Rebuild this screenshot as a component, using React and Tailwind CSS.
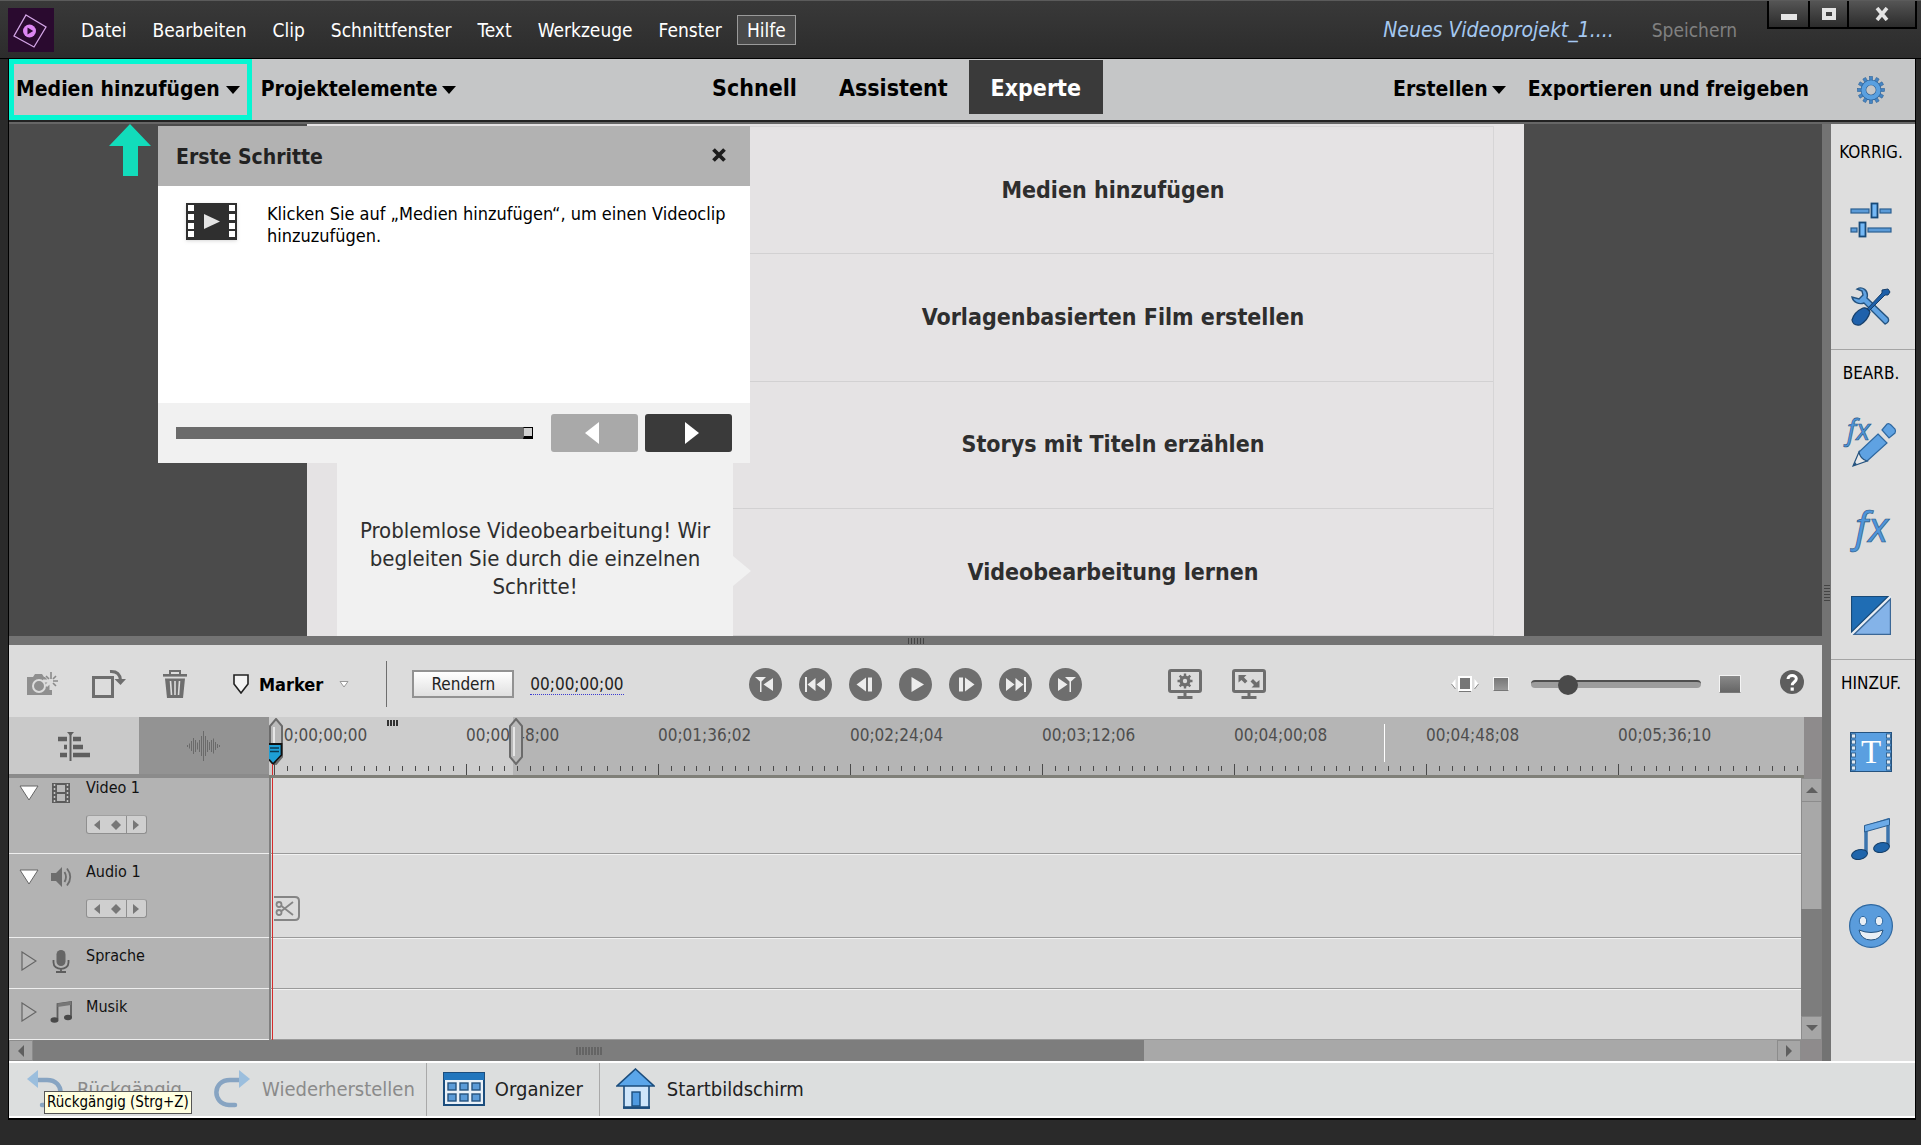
import React from "react";

const cx = (...c) => c.filter(Boolean).join(" ");

function Caret({ className }) {
  return (
    <svg className={cx("h-2 w-3.5 shrink-0", className)} viewBox="0 0 14 8" aria-hidden="true">
      <path d="M0 0H14L7 8Z" fill="currentColor" />
    </svg>
  );
}

function Logo() {
  return (
    <svg className="h-11 w-[46px] shrink-0" viewBox="0 0 46 44" aria-hidden="true">
      <rect width="46" height="44" fill="#2a0a2f" />
      <path d="M18 7L38 19L26 39L6 28Z" fill="none" stroke="#d3a5e6" strokeWidth="1.3" />
      <circle cx="21.5" cy="23" r="6.5" fill="#dd86f3" />
      <path d="M19.5 19.6V26.4L25.2 23Z" fill="#2a0a2f" />
    </svg>
  );
}

function Gear() {
  return (
    <svg className="h-7 w-7" viewBox="-16 -16 32 32" aria-hidden="true">
      {Array.from({ length: 12 }, (_, i) => (
        <rect key={i} x="-1.8" y="-15.5" width="3.6" height="6" fill="#4585c4" stroke="#2b5f95" strokeWidth=".6" transform={`rotate(${i * 30})`} />
      ))}
      <circle r="8.6" fill="none" stroke="#2b5f95" strokeWidth="6.4" />
      <circle r="8.6" fill="none" stroke="#5aa0e0" strokeWidth="5" />
    </svg>
  );
}

const MENU = ["Datei", "Bearbeiten", "Clip", "Schnittfenster", "Text", "Werkzeuge", "Fenster"];

function TitleBar() {
  return (
    <header className="relative flex h-[58px] shrink-0 items-center border-b border-black bg-linear-to-b from-[#393939] to-[#2c2c2c] pl-2 text-white">
      <Logo />
      <nav className="ml-3.5 flex items-center text-[19px] leading-6">
        {MENU.map((m) => (
          <button key={m} className="px-[13px]">{m}</button>
        ))}
        <button className="ml-0.5 border border-[#9a9a9a] bg-[#4a4a4a] px-[9px] py-0.5 leading-6">Hilfe</button>
      </nav>
      <div className="ml-auto mr-[184px] flex items-center gap-[38px] leading-6">
        <span className="text-[21px] italic text-[#a5c8f0]">Neues Videoprojekt_1....</span>
        <button className="text-[19px] text-[#808080]" disabled>Speichern</button>
      </div>
      <div className="absolute right-1 top-0 flex gap-0.5 border-2 border-t-0 border-black bg-black">
        <button aria-label="Minimieren" className="flex h-[26px] w-[39px] items-center justify-center bg-linear-to-b from-[#555] to-[#2c2c2c]">
          <span className="mt-1.5 h-1.5 w-4 bg-[#e4e4e4]" />
        </button>
        <button aria-label="Maximieren" className="flex h-[26px] w-[37px] items-center justify-center bg-linear-to-b from-[#555] to-[#2c2c2c]">
          <span className="h-3 w-3.5 border-[4px] border-[#e4e4e4]" />
        </button>
        <button aria-label="Schließen" className="flex h-[26px] w-[66px] items-center justify-center bg-linear-to-b from-[#555] to-[#2c2c2c]">
          <svg className="h-3.5 w-4" viewBox="0 0 16 14" aria-hidden="true">
            <path d="M3 1L13 13M13 1L3 13" stroke="#e4e4e4" strokeWidth="3.6" />
          </svg>
        </button>
      </div>
    </header>
  );
}

function ModeBar() {
  return (
    <div className="relative flex h-[61px] shrink-0 items-center bg-[#c5c6c7] font-bold text-black">
      <div className="flex grow-[683] basis-0 items-center self-stretch text-[21px]">
        <button className="flex items-center self-stretch border-[5px] border-[#06f6d2] pl-0.5 pr-[7px]">
          Medien hinzufügen
          <Caret className="ml-1.5" />
        </button>
        <button className="ml-[9px] flex items-center">
          Projektelemente
          <Caret className="ml-1" />
        </button>
      </div>
      <nav className="-mt-1.5 flex items-center text-[23px]">
        <button className="px-[21px] pt-1">Schnell</button>
        <button className="px-[21px] pt-1">Assistent</button>
        <button className="h-[54px] bg-[#3a3a3a] px-[22px] pt-1 text-white">Experte</button>
      </nav>
      <div className="flex grow-[813] basis-0 items-center justify-end text-[21px]">
        <button className="mr-[22px] flex items-center">
          Erstellen
          <Caret className="ml-1" />
        </button>
        <button className="mr-12">Exportieren und freigeben</button>
        <button aria-label="Einstellungen" className="mr-[30px]"><Gear /></button>
      </div>
    </div>
  );
}

function GuideDialog() {
  return (
    <section role="dialog" aria-label="Erste Schritte" className="absolute left-[149px] top-0.5 flex w-[592px] flex-col bg-white">
      <div className="flex h-[60px] items-center justify-between bg-[#b2b2b2] pl-[18px] pr-6 pt-1">
        <h2 className="text-[21px] font-bold text-[#222]">Erste Schritte</h2>
        <button aria-label="Schließen" className="-mt-1.5">
          <svg className="h-3.5 w-3.5" viewBox="0 0 14 14" aria-hidden="true">
            <path d="M1.5 1.5L12.5 12.5M12.5 1.5L1.5 12.5" stroke="#1c1c1c" strokeWidth="3.8" />
          </svg>
        </button>
      </div>
      <div className="flex h-[217px] items-start gap-[30px] pl-7 pr-6 pt-[17px]">
        <svg className="h-[37px] w-[51px] shrink-0 drop-shadow" viewBox="0 0 51 37" aria-hidden="true">
          <rect width="51" height="37" fill="#2f2f2f" />
          {[2, 11, 20, 28].map((y) => (
            <g key={y} fill="#fff">
              <rect x="2" y={y} width="6" height="6" />
              <rect x="43" y={y} width="6" height="6" />
            </g>
          ))}
          <path d="M18 11V26L34 18.5Z" fill="#e4e4e4" />
        </svg>
        <p className="text-[18px] leading-[22px] text-black">Klicken Sie auf „Medien hinzufügen“, um einen Videoclip hinzuzufügen.</p>
      </div>
      <div className="flex h-[60px] items-center bg-[#f1f1f1] px-[18px]">
        <div role="progressbar" aria-label="Fortschritt" aria-valuenow="97" className="flex h-3 flex-1 bg-[#6b6b6b]">
          <span className="ml-auto w-2.5 border border-b-[3px] border-black border-l-[#6b6b6b] bg-[#d0d0d0]" />
        </div>
        <button aria-label="Zurück" className="ml-[18px] flex h-[38px] w-[87px] items-center justify-center rounded-[3px] bg-[#a9a9a9]">
          <svg className="mr-1.5 h-[22px] w-3.5" viewBox="0 0 14 22" aria-hidden="true"><path d="M14 0V22L0 11Z" fill="#fff" /></svg>
        </button>
        <button aria-label="Weiter" className="ml-[7px] flex h-[38px] w-[87px] items-center justify-center rounded-[3px] bg-[#3a3a3a]">
          <svg className="ml-1.5 h-[22px] w-3.5" viewBox="0 0 14 22" aria-hidden="true"><path d="M0 0V22L14 11Z" fill="#fff" /></svg>
        </button>
      </div>
    </section>
  );
}

const TOPICS = ["Medien hinzufügen", "Vorlagenbasierten Film erstellen", "Storys mit Titeln erzählen", "Videobearbeitung lernen"];

function Preview() {
  return (
    <div className="relative flex min-h-0 flex-1 justify-center overflow-hidden bg-[#4b4b4b]">
      <div className="flex w-full max-w-[1217px] bg-[#e5e3e4] px-[30px] pt-0.5">
        <div className="relative flex w-[396px] flex-col justify-end bg-[#f1f1f1] px-4 pb-[35px] text-center">
          <p className="text-[22px] leading-7 text-[#2e2e2e]">Problemlose Videobearbeitung! Wir begleiten Sie durch die einzelnen Schritte!</p>
          <svg className="absolute bottom-[50px] left-full h-[30px] w-[18px]" viewBox="0 0 18 30" aria-hidden="true">
            <path d="M0 0L18 15L0 30Z" fill="#f1f1f1" />
          </svg>
        </div>
        <ul className="flex flex-1 flex-col border-r border-t border-[#d6d5d6]">
          {TOPICS.map((t) => (
            <li key={t} className="flex flex-1 border-b border-[#d2d1d2]">
              <button className="w-full text-[23px] font-bold text-[#2e2e2e]">{t}</button>
            </li>
          ))}
        </ul>
      </div>
      <GuideDialog />
      <svg className="absolute left-[100px] top-0 h-[52px] w-[42px]" viewBox="0 0 42 52" aria-hidden="true">
        <path d="M21 0L42 22H29V52H14V22H0Z" fill="#12dcbb" />
      </svg>
    </div>
  );
}

function Round({ label, children }) {
  return (
    <button aria-label={label} className="h-[33px] w-[33px]">
      <svg className="h-[33px] w-[33px]" viewBox="0 0 33 33" aria-hidden="true">
        <circle cx="16.5" cy="16.5" r="16.5" fill="#6e6e6e" />
        <g fill="#ececec">{children}</g>
      </svg>
    </button>
  );
}

function ControlBar() {
  return (
    <div className="flex h-[72px] shrink-0 items-center bg-[#dcdcdc] pt-1.5">
      <div className="flex flex-1 items-center pl-[17px]">
        <button aria-label="Schnappschuss">
          <svg className="h-6 w-8" viewBox="0 0 32 24" aria-hidden="true">
            <path d="M1 5H7L9 2H16L18 5H26V23H1Z" fill="#8f8f8f" />
            <circle cx="13" cy="14" r="6" fill="#8f8f8f" stroke="#dcdcdc" strokeWidth="2" />
            <path d="M25 0V18M17 9H32M20 4L30 14M30 4L20 14" stroke="#dcdcdc" strokeWidth="3" />
            <path d="M25 0V7M27 9H32M27 7L30 4M23 7L20 4M27 11L30 14" stroke="#8a8a8a" strokeWidth="1.6" />
          </svg>
        </button>
        <button aria-label="Drehen" className="ml-[34px]">
          <svg className="h-[30px] w-[34px]" viewBox="0 0 34 30" aria-hidden="true">
            <rect x="1.5" y="8.5" width="19" height="19" fill="none" stroke="#6e6e6e" strokeWidth="3" />
            <path d="M18 2.5C25 2 28 5 28.5 11" fill="none" stroke="#6e6e6e" strokeWidth="3" />
            <path d="M22.5 10H34L28.5 16Z" fill="#6e6e6e" />
          </svg>
        </button>
        <button aria-label="Löschen" className="ml-9">
          <svg className="h-7 w-[26px]" viewBox="0 0 26 28" aria-hidden="true">
            <path d="M8 4V1H18V4" fill="none" stroke="#6e6e6e" strokeWidth="2" />
            <rect x="1" y="4" width="24" height="2.6" fill="#6e6e6e" />
            <path d="M3 8.5H23L21 28H5Z" fill="#6e6e6e" />
            <path d="M8.5 11L9.5 25M13 11V25M17.5 11L16.5 25" stroke="#dcdcdc" strokeWidth="1.6" />
          </svg>
        </button>
        <button className="ml-[45px] flex items-center text-[18px] font-bold">
          <svg className="mr-2.5 h-5 w-4" viewBox="0 0 16 20" aria-hidden="true">
            <path d="M1 1H15V10L8 19L1 10Z" fill="#f4f4f4" stroke="#222" strokeWidth="1.6" />
          </svg>
          Marker
          <svg className="ml-4 h-2 w-2.5" viewBox="0 0 10 8" aria-hidden="true">
            <path d="M1 1.500H9L5 7Z" fill="#fff" stroke="#999" />
          </svg>
        </button>
        <span className="ml-[37px] h-[46px] w-px bg-[#6e6e6e]" />
        <button className="ml-[25px] h-7 w-[102px] border-2 border-[#929292] bg-linear-to-b from-white to-[#e0e0e0] text-[17px] leading-5 text-[#222]">Rendern</button>
        <button className="ml-4 border-b border-dotted border-[#3b3bd0] text-[17px] leading-5 text-[#222]">00;00;00;00</button>
      </div>

      <div className="flex items-center gap-[17px]">
        <Round label="Vorheriger Marker">
          <path d="M6 9H17L12.500 13.500V24H11V13.500Z" /><path d="M24 10V23L14.500 16.500Z" />
        </Round>
        <Round label="Zum Anfang">
          <rect x="6" y="9" width="2" height="15" /><path d="M16.500 10V23L8.500 16.500ZM26 10V23L17.500 16.500Z" />
        </Round>
        <Round label="Bild zurück">
          <path d="M17 9.500V23.500L7.500 16.500Z" /><rect x="19" y="9.500" width="4" height="14" />
        </Round>
        <Round label="Wiedergabe"><path d="M12.500 9V24L25 16.500Z" /></Round>
        <Round label="Bild vor">
          <path d="M16 9.500V23.500L25.500 16.500Z" /><rect x="10" y="9.500" width="4" height="14" />
        </Round>
        <Round label="Zum Ende">
          <rect x="25" y="9" width="2" height="15" /><path d="M7 10V23L15.500 16.500ZM16.500 10V23L24.500 16.500Z" />
        </Round>
        <Round label="Nächster Marker">
          <path d="M27 9H16L20.500 13.500V24H22V13.500Z" /><path d="M9 10V23L18.500 16.500Z" />
        </Round>
      </div>

      <div className="flex flex-1 items-center pr-[18px]">
        <button aria-label="Wiedergabeeinstellungen" className="ml-[86px]">
          <svg className="h-[30px] w-[34px]" viewBox="0 0 34 30" aria-hidden="true">
            <rect x="1.500" y="1.500" width="31" height="21" rx="1.500" fill="none" stroke="#6e6e6e" strokeWidth="3" />
            <path d="M17 23V27M9.500 28.500H24.500" stroke="#6e6e6e" strokeWidth="3" />
            <g transform="translate(17 12)" stroke="#6e6e6e" fill="none">
              <circle r="4" strokeWidth="3" />
              <path d="M0 -7.500V7.500M-7.500 0H7.500M-5.300 -5.300L5.300 5.300M5.300 -5.300L-5.300 5.300" strokeWidth="2.400" />
              <circle r="2.200" fill="#dcdcdc" stroke="none" />
            </g>
          </svg>
        </button>
        <button aria-label="Vollbild" className="ml-[30px]">
          <svg className="h-[30px] w-[34px]" viewBox="0 0 34 30" aria-hidden="true">
            <rect x="1.500" y="1.500" width="31" height="21" rx="1.500" fill="none" stroke="#6e6e6e" strokeWidth="3" />
            <path d="M17 23V27M9.500 28.500H24.500" stroke="#6e6e6e" strokeWidth="3" />
            <path d="M6.500 6H14.500L12 8.500L15.500 12L13 14.500L9.500 11L6.500 13.500ZM27.500 18.500H19.500L22 16L18.500 12.500L21 10L24.500 13.500L27.500 11Z" fill="#6e6e6e" />
          </svg>
        </button>
        <button aria-label="An Fenster anpassen" className="ml-auto">
          <svg className="h-4 w-7" viewBox="0 0 28 16" aria-hidden="true">
            <rect x="8" y="1" width="12" height="13" fill="#777" stroke="#fff" strokeWidth="2" />
            <path d="M8 15.500H20" stroke="#777" />
            <path d="M4.500 3V13L.5 8ZM23.500 3V13L27.500 8Z" fill="#fff" />
            <path d="M4.500 13L.5 8M23.500 13L27.500 8" stroke="#888" />
          </svg>
        </button>
        <button aria-label="Verkleinern" className="ml-3.5 h-[14px] w-4 border border-[#f4f4f4] border-b-[#777] bg-linear-to-b from-[#777] to-[#999]" />
        <input
          type="range"
          aria-label="Zoom"
          defaultValue="18"
          className="ml-[22px] h-5 w-[170px] appearance-none bg-transparent [&::-webkit-slider-runnable-track]:h-2 [&::-webkit-slider-runnable-track]:rounded-full [&::-webkit-slider-runnable-track]:border-t-2 [&::-webkit-slider-runnable-track]:border-[#4e4e4e] [&::-webkit-slider-runnable-track]:bg-[#9c9c9c] [&::-webkit-slider-thumb]:-mt-[7px] [&::-webkit-slider-thumb]:h-5 [&::-webkit-slider-thumb]:w-5 [&::-webkit-slider-thumb]:appearance-none [&::-webkit-slider-thumb]:rounded-full [&::-webkit-slider-thumb]:bg-[#4a4a4a]"
        />
        <button aria-label="Vergrößern" className="ml-[18px] h-[18px] w-[22px] border border-[#f4f4f4] border-b-[#777] bg-linear-to-b from-[#8a8a8a] to-[#666]" />
        <button aria-label="Hilfe anzeigen" className="ml-[39px] -mt-1">
          <svg className="h-6 w-6" viewBox="0 0 24 24" aria-hidden="true">
            <circle cx="12" cy="12" r="12" fill="#5e5e5e" />
            <path d="M8 9C8 4.500 16.300 4.500 16.300 8.800C16.300 12 12.200 12 12.200 15.200" fill="none" stroke="#fff" strokeWidth="3" />
            <rect x="10.600" y="17.500" width="3.200" height="3.200" fill="#fff" />
          </svg>
        </button>
      </div>
    </div>
  );
}

const TIMES = ["00;00;00;00", "00;00;48;00", "00;01;36;02", "00;02;24;04", "00;03;12;06", "00;04;00;08", "00;04;48;08", "00;05;36;10"];

function Handle({ className }) {
  return (
    <svg className={cx("absolute top-px h-[47px] w-3.5", className)} viewBox="0 0 14 47" aria-hidden="true">
      <path d="M7 1L13 8V39L7 46L1 39V8Z" fill="#b9b9b9" stroke="#6b6b6b" strokeWidth="2" />
      <path d="M5 9V38" stroke="#e6e6e6" strokeWidth="2" />
    </svg>
  );
}

function Ruler() {
  return (
    <div className="flex h-[61px] shrink-0 bg-[#8e8b8c]">
      <div className="flex w-[260px] shrink-0 border-b-4 border-[#8b8b8b]">
        <button aria-label="Zeitleiste" className="flex flex-1 items-center justify-center bg-[#c9c9c9]">
          <svg className="h-[30px] w-8" viewBox="0 0 32 30" aria-hidden="true">
            <path d="M0 8H9M15 8H23M6 16H9M15 16H25M2 24H9M15 24H32" stroke="#5f5f5f" strokeWidth="4.500" />
            <path d="M12.500 3V30" stroke="#5f5f5f" strokeWidth="2" /><path d="M9 1H16L12.500 5Z" fill="#5f5f5f" />
          </svg>
        </button>
        <button aria-label="Audioansicht" className="flex flex-1 items-center justify-center bg-[#939393]">
          <svg className="h-[30px] w-9" viewBox="0 0 36 30" aria-hidden="true">
            {[2, 5, 10, 16, 12, 7, 12, 20, 30, 20, 12, 8, 12, 15, 8, 4, 2].map((h, i) => (
              <rect key={i} x={i * 2 + 1} y={15 - h / 2} width="1" height={h} fill="#6a6a6a" />
            ))}
          </svg>
        </button>
      </div>
      <div className="relative flex-1 overflow-hidden border-b-[3px] border-[#7f7f78] bg-[#b5b5b5]">
        <div className="absolute inset-y-0 left-0 w-[244px] bg-[#cdcdcd]" />
        <svg className="absolute bottom-0 left-[5px] h-[11px] w-full" aria-hidden="true">
          {Array.from({ length: 120 }, (_, i) => (
            <rect key={i} x={Math.round(i * 12.8)} y={i % 15 ? 2 : 0} width="1" height={i % 15 ? 5 : 11} fill="#4a4a4a" />
          ))}
        </svg>
        <div className="relative flex pl-[5px] pt-2 text-[17px] leading-5 text-[#4e4e4e]">
          {TIMES.map((t) => (
            <span key={t} className="w-48 shrink-0">{t}</span>
          ))}
        </div>
        <svg className="absolute left-[118px] top-[3px] h-1.5 w-3" viewBox="0 0 12 6" aria-hidden="true">
          <path d="M1 0V6M4 0V6M7 0V6M10 0V6" stroke="#333" strokeWidth="2" />
        </svg>
        <span className="absolute left-[1115px] top-[7px] h-[38px] w-px bg-white" />
        <Handle className="left-0" />
        <Handle className="left-[240px]" />
        <svg className="absolute bottom-0 left-0 h-8 w-3.5" viewBox="0 0 14 32" aria-hidden="true">
          <path d="M0 1H12.500V12L4 21L0 16.500" fill="#1e9fd6" stroke="#111" strokeWidth="1.800" />
          <path d="M1 5H10M1 8.500H10" stroke="#0b3a52" strokeWidth="1.500" />
          <path d="M3.500 21V32" stroke="#d52b2b" strokeWidth="1" />
        </svg>
      </div>
      <div className="w-[18px] shrink-0" />
    </div>
  );
}

function TrackIcon({ kind }) {
  return (
    <svg className="h-6 w-6 shrink-0" viewBox="0 0 24 24" aria-hidden="true">
      {kind === "video" && (
        <>
          <path d="M3 2H21V22H3Z" fill="#5c5c5c" />
          <path d="M8 4H16V11H8ZM8 13H16V20H8Z" fill="#b9b9b9" />
          <path d="M5.500 3V21M18.500 3V21" stroke="#c4c4c4" strokeWidth="1.500" strokeDasharray="2 2" />
        </>
      )}
      {kind === "audio" && (
        <>
          <path d="M2 8H7L13 2V22L7 16H2Z" fill="#6d6d6d" />
          <path d="M15.500 7Q18.500 12 15.500 17M18 3.500Q24.500 12 18 20.500" fill="none" stroke="#6d6d6d" strokeWidth="1.800" />
        </>
      )}
      {kind === "mic" && (
        <>
          <rect x="7.500" y="1" width="9" height="16" rx="4.500" fill="#666" />
          <path d="M4.500 11V13.500C4.500 22 19.500 22 19.500 13.500V11M12 20V23M7 23H17" fill="none" stroke="#5d5d5d" strokeWidth="1.800" />
        </>
      )}
      {kind === "music" && (
        <>
          <path d="M8.500 19V4L22 2V17" fill="none" stroke="#5d5d5d" strokeWidth="1.800" />
          <path d="M8.500 3.500L22 1.500V5L8.500 7Z" fill="#777" />
          <ellipse cx="5.500" cy="20" rx="4" ry="2.700" fill="#484848" /><ellipse cx="19" cy="17.500" rx="4" ry="2.700" fill="#484848" />
        </>
      )}
    </svg>
  );
}

const TRACKS = [
  { name: "Video 1", kind: "video", open: true },
  { name: "Audio 1", kind: "audio", open: true },
  { name: "Sprache", kind: "mic" },
  { name: "Musik", kind: "music" },
];

function Track({ name, kind, open }) {
  return (
    <div className={cx("flex shrink-0", open ? "h-[84px]" : "h-[51px]")}>
      <div className="flex w-[260px] shrink-0 items-start border-b border-[#eee] bg-[#b3b3b3] pl-2.5 pt-2">
        <button aria-label={`${name} auf-/zuklappen`} className="mt-[5px] flex w-5 justify-center">
          {open ? (
            <svg className="mt-0.5 h-4 w-5" viewBox="0 0 20 16" aria-hidden="true"><path d="M1 1H19L10 15Z" fill="#fff" stroke="#666" /></svg>
          ) : (
            <svg className="h-5 w-4" viewBox="0 0 16 20" aria-hidden="true"><path d="M1 1L15 10L1 19Z" fill="#b9b9b9" stroke="#666" strokeWidth="1.200" /></svg>
          )}
        </button>
        <div className="ml-2.5 mt-[3px]"><TrackIcon kind={kind} /></div>
        <div className="ml-[13px]">
          <div className="text-[16px] leading-5 text-[#111]">{name}</div>
          {open && (
            <div className="mt-[17px] flex h-[19px] w-[61px] overflow-hidden rounded-[3px] border border-[#8f8f8f] border-t-[#a0a0a0] bg-[#cfcfcf]">
              <button aria-label="Vorheriger Keyframe" className="flex flex-1 items-center justify-center">
                <svg className="h-2.5 w-1.5" viewBox="0 0 6 10" aria-hidden="true"><path d="M6 0V10L0 5Z" fill="#777" /></svg>
              </button>
              <button aria-label="Keyframe" className="flex flex-1 items-center justify-center">
                <svg className="h-2.5 w-2.5" viewBox="0 0 10 10" aria-hidden="true"><path d="M5 0L10 5L5 10L0 5Z" fill="#777" /></svg>
              </button>
              <button aria-label="Nächster Keyframe" className="flex flex-1 items-center justify-center border-l border-[#8f8f8f]">
                <svg className="h-2.5 w-1.5" viewBox="0 0 6 10" aria-hidden="true"><path d="M0 0V10L6 5Z" fill="#777" /></svg>
              </button>
            </div>
          )}
        </div>
      </div>
      <div className="relative flex-1 border-b border-l-2 border-b-[#9a9a9a] border-l-[#808080] bg-[#dcdcdc]">
        <div className="h-px bg-[#f2f2f2]" />
        <span className="absolute inset-y-0 left-px -mb-px w-px bg-[#d52b2b]" />
        {kind === "audio" && (
          <button aria-label="Teilen" className="absolute bottom-4 left-[3px]">
            <svg className="h-[25px] w-[26px]" viewBox="0 0 26 25" aria-hidden="true">
              <path d="M0 1H21Q25 1 25 5V20Q25 24 21 24H0" fill="none" stroke="#858585" strokeWidth="2" />
              <g fill="none" stroke="#858585" strokeWidth="1.800">
                <circle cx="5" cy="8.500" r="2.500" /><circle cx="5" cy="16.500" r="2.500" />
                <path d="M7.500 10L19 19M7.500 15L19 6" />
              </g>
            </svg>
          </button>
        )}
      </div>
    </div>
  );
}

function Timeline() {
  return (
    <>
      <Ruler />
      <div className="flex h-[262px] shrink-0 overflow-hidden">
        <div className="-mt-2 flex h-[270px] flex-1 flex-col">
          {TRACKS.map((t) => <Track key={t.name} {...t} />)}
        </div>
        <div className="flex w-[21px] shrink-0 flex-col bg-[#7d7d7d]">
          <button aria-label="Nach oben" className="flex h-6 items-center justify-center border border-[#8c8c8c] bg-[#a6a6a6]">
            <svg className="h-1.5 w-3" viewBox="0 0 12 6" aria-hidden="true"><path d="M0 6H12L6 0Z" fill="#5f5f5f" /></svg>
          </button>
          <div className="h-[107px] border-x border-[#8c8c8c] bg-[#a8a8a8]" />
          <button aria-label="Nach unten" className="mt-auto flex h-6 items-center justify-center border border-[#8c8c8c] bg-[#a6a6a6]">
            <svg className="h-1.5 w-3" viewBox="0 0 12 6" aria-hidden="true"><path d="M0 0H12L6 6Z" fill="#5f5f5f" /></svg>
          </button>
        </div>
      </div>
      <div className="flex h-[21px] shrink-0 bg-[#a8a8a8]">
        <button aria-label="Nach links" className="flex w-6 items-center justify-center border border-[#8c8c8c] bg-[#a6a6a6]">
          <svg className="h-3 w-1.5" viewBox="0 0 6 12" aria-hidden="true"><path d="M6 0V12L0 6Z" fill="#5f5f5f" /></svg>
        </button>
        <div className="flex w-[1111px] items-center justify-center bg-[#7d7d7d]">
          <svg className="h-2 w-[26px]" viewBox="0 0 26 8" aria-hidden="true">
            <path d="M1 0V8M4 0V8M7 0V8M10 0V8M13 0V8M16 0V8M19 0V8M22 0V8M25 0V8" stroke="#4c4c4c" />
          </svg>
        </div>
        <button aria-label="Nach rechts" className="ml-auto flex w-6 items-center justify-center border border-[#8c8c8c] bg-[#a6a6a6]">
          <svg className="h-3 w-1.5" viewBox="0 0 6 12" aria-hidden="true"><path d="M0 0V12L6 6Z" fill="#5f5f5f" /></svg>
        </button>
        <div className="w-[21px] bg-[#8e8b8c]" />
      </div>
    </>
  );
}

const FxGlyph = ({ size, x, y }) => (
  <text x={x} y={y} fontFamily="'Noto Sans', sans-serif" fontStyle="italic" fontSize={size} fill="#4f96da" stroke="#27527f" strokeWidth=".6">fx</text>
);

const SIDE_ICONS = {
  Korrigieren: (
    <svg className="h-9 w-[42px]" viewBox="0 0 42 36" aria-hidden="true">
      <g fill="#5b9bd8" stroke="#2c5f91" strokeWidth="1.200">
        <rect x="1" y="7" width="18" height="4" /><rect x="30" y="7" width="11" height="4" />
        <rect x="1" y="26" width="6" height="4" /><rect x="18" y="26" width="23" height="4" />
      </g>
      <g fill="#74b8f5" stroke="#174a79" strokeWidth="1.800">
        <rect x="21.500" y="1.500" width="6" height="14" /><rect x="9.500" y="20.500" width="6" height="14" />
      </g>
    </svg>
  ),
  Werkzeuge: (
    <svg className="h-10 w-10" viewBox="0 0 40 40" aria-hidden="true">
      <path d="M6 3C11 0 18 4 16 12L37 32Q39 36 34 38L13 17C8 19 2 16 1 11L8 13L12 9L11 5Z" fill="#5fa2e2" stroke="#25537f" strokeWidth="1.400" />
      <path d="M37 3L39 6L37 9L34 9L18 25L16 23L31 7V4Z" fill="#1d5fa8" stroke="#163e69" />
      <path d="M12 22Q16 21 19 26Q17 34 9 39Q2 40 1 34Q3 26 12 22Z" fill="#1f61ab" stroke="#163e69" strokeWidth="1.200" />
    </svg>
  ),
  "Effekte bearbeiten": (
    <svg className="h-[54px] w-[54px] overflow-visible" viewBox="0 -2 54 54" aria-hidden="true">
      <FxGlyph size={29} x={3} y={23} />
      <path d="M34 17L43 26L23 44L9 49L14 35Z" fill="#dedede" stroke="#dedede" strokeWidth="3" />
      <path d="M34 17L43 26L23 44Q16 42 15 35Z" fill="#5fa2e2" stroke="#2f68a0" strokeWidth="1.200" />
      <path d="M15 35Q16 42 23 44L9 49Z" fill="#e8e8e8" stroke="#25537f" strokeWidth="1.200" /><path d="M11 45L13 47.500L9 49Z" fill="#25537f" />
      <path d="M38 13L43 7Q45 6 47 8L51 12Q52 14 51 16L45 21Z" fill="#5fa2e2" stroke="#2f68a0" strokeWidth="1.200" />
    </svg>
  ),
  Effekte: (
    <svg className="h-14 w-11 overflow-visible" viewBox="0 0 44 56" aria-hidden="true"><FxGlyph size={42} x={6} y={41} /></svg>
  ),
  Überblendungen: (
    <svg className="h-[39px] w-10" viewBox="0 0 40 39" aria-hidden="true">
      <rect width="40" height="39" fill="#e9eef4" />
      <path d="M.5 .5H37L.5 36Z" fill="#1f6db4" stroke="#184a78" strokeWidth="1.200" />
      <path d="M39.500 3V38.500H3Z" fill="#84b3e8" stroke="#3b6796" strokeWidth="1.400" />
    </svg>
  ),
  Titel: (
    <svg className="h-10 w-[42px]" viewBox="0 0 42 40" aria-hidden="true">
      <rect x=".5" y=".5" width="41" height="39" fill="#5a9fe0" stroke="#25537f" />
      {[2, 8, 14, 21, 28, 34].map((y) => (
        <g key={y} fill="#dfe9f3" stroke="#25537f" strokeWidth=".8">
          <rect x="1.500" y={y} width="4" height="4" /><rect x="36.500" y={y} width="4" height="4" />
        </g>
      ))}
      <text x="21" y="31" textAnchor="middle" fontFamily="'Liberation Serif', serif" fontSize="33" fill="#fff">T</text>
    </svg>
  ),
  Musik: (
    <svg className="h-[42px] w-10" viewBox="0 0 40 42" aria-hidden="true">
      <path d="M15 36V9L37 2V29" fill="none" stroke="#3b74ad" strokeWidth="3.500" />
      <path d="M13.500 7.500L38.500 .8V7L13.500 14Z" fill="#6cabe8" stroke="#2c5f91" />
      <ellipse cx="8.500" cy="36.500" rx="8" ry="4.800" transform="rotate(-12 8.500 36.500)" fill="#1f65ab" stroke="#153f69" />
      <ellipse cx="30.500" cy="29.500" rx="8" ry="4.800" transform="rotate(-12 30.500 29.500)" fill="#1f65ab" stroke="#153f69" />
    </svg>
  ),
  Grafiken: (
    <svg className="h-11 w-11" viewBox="0 0 44 44" aria-hidden="true">
      <circle cx="22" cy="22" r="21.400" fill="#5a9cdc" stroke="#2f68a0" strokeWidth="1.200" />
      <ellipse cx="14" cy="17" rx="3.700" ry="4.600" fill="#e9eff5" stroke="#2f68a0" /><ellipse cx="30" cy="17" rx="3.700" ry="4.600" fill="#e9eff5" stroke="#2f68a0" />
      <path d="M10 26Q22 31 34 26Q32 36 22 36Q12 36 10 26Z" fill="#e9eff5" stroke="#25537f" />
    </svg>
  ),
};

const SECTIONS = [
  { label: "KORRIG.", icons: ["Korrigieren", "Werkzeuge"], head: "h-12", cell: "h-[86px]" },
  { label: "BEARB.", icons: ["Effekte bearbeiten", "Effekte", "Überblendungen"], head: "h-12", cell: "h-[87px]" },
  { label: "HINZUF.", icons: ["Titel", "Musik", "Grafiken"], head: "h-12", cell: "h-[87px]" },
];

function Sidebar() {
  return (
    <aside className="flex w-[84px] shrink-0 flex-col bg-[#dedede] pt-[5px]">
      {SECTIONS.map((s, i) => (
        <section key={s.label} className={cx(i < 2 && "border-b border-[#a5a5a5]")}>
          <h3 className={cx("flex items-center justify-center pr-1 text-[17px] text-black", s.head)}>{s.label}</h3>
          {s.icons.map((name) => (
            <button key={name} aria-label={name} className={cx("flex w-full items-center justify-center pr-1", s.cell)}>
              {SIDE_ICONS[name]}
            </button>
          ))}
        </section>
      ))}
    </aside>
  );
}

function UndoArrow({ flip }) {
  return (
    <svg className="h-[38px] w-9" viewBox="0 0 36 38" aria-hidden="true">
      <g transform={flip ? "translate(36 0) scale(-1 1)" : undefined}>
        <path d="M8 10H20C38 10 38 34 21 35H15" fill="none" stroke="#87a4c2" strokeWidth="4.500" strokeLinecap="round" />
        <path d="M0 9L11 0V18Z" fill="#9bbedd" />
      </g>
    </svg>
  );
}

function BottomBar() {
  return (
    <footer className="relative flex h-[57px] shrink-0 items-stretch border-y-2 border-white bg-[#dcdede] text-[20px] text-[#222]">
      <button disabled className="flex items-center pb-0.5 pl-[18px] text-[#8b8b8b]">
        <UndoArrow />
        <span className="ml-3.5">Rückgängig</span>
      </button>
      <button disabled className="ml-8 flex items-center border-r border-[#a9a9a9] pb-0.5 pr-[11px] text-[#8b8b8b]">
        <UndoArrow flip />
        <span className="ml-3">Wiederherstellen</span>
      </button>
      <button className="flex items-center border-r border-[#a9a9a9] px-4 pb-0.5">
        <svg className="mr-2.5 h-[34px] w-[42px]" viewBox="0 0 42 34" aria-hidden="true">
          <rect x="1" y="1" width="40" height="32" fill="#eaf1f8" stroke="#1b4d7d" strokeWidth="2" />
          <rect x="1" y="1" width="40" height="7" fill="#2276bd" />
          {[5, 17, 29].map((x) => [11, 22].map((y) => (
            <rect key={`${x}-${y}`} x={x} y={y} width="8" height="7" fill="#5b9bd8" stroke="#25537f" strokeWidth="1.400" />
          )))}
        </svg>
        Organizer
      </button>
      <button className="flex items-center pb-0.5 pl-4">
        <svg className="mr-3 h-[41px] w-[39px]" viewBox="0 0 39 41" aria-hidden="true">
          <rect x="8" y="17" width="25" height="23" fill="#cfe6fb" stroke="#1b4d7d" strokeWidth="1.600" />
          <path d="M19.500 1L38 18H1Z" fill="#5aa6ea" stroke="#1b4d7d" strokeWidth="1.600" />
          <path d="M7 39.500H34" stroke="#1b4d7d" strokeWidth="2.500" />
          <rect x="16" y="24" width="8" height="14" fill="#4f9ae0" stroke="#1b4d7d" strokeWidth="1.400" />
        </svg>
        Startbildschirm
      </button>
      <div role="tooltip" className="absolute bottom-0.5 left-[35px] border border-[#555] bg-[#ffffe1] px-0.5 text-[15px] leading-[21px] text-black">Rückgängig (Strg+Z)</div>
    </footer>
  );
}

export default function App() {
  return (
    <div className="flex h-screen flex-col overflow-hidden border-t border-[#5b5b5b] bg-[#2a2a2a] font-['DejaVu_Sans_Condensed','Noto_Sans',sans-serif]">
      <TitleBar />
      <div className="mr-[5px] ml-[8px] flex min-h-0 flex-1 flex-col border-x border-b-2 border-black">
        <ModeBar />
        <div className="h-1 shrink-0 border-t-2 border-[#222] bg-[#666]" />
        <div className="flex min-h-0 flex-1">
          <main className="flex min-w-0 flex-1 flex-col">
            <Preview />
            <div className="flex h-[9px] shrink-0 items-center justify-center bg-[#737373]">
              <svg className="h-1.5 w-4" viewBox="0 0 16 6" aria-hidden="true"><path d="M.5 0V6M3.500 0V6M6.500 0V6M9.500 0V6M12.500 0V6M15.500 0V6" stroke="#444" /></svg>
            </div>
            <ControlBar />
            <Timeline />
          </main>
          <div className="flex w-[9px] shrink-0 items-center justify-center bg-[#737373]">
            <svg className="h-4 w-1.5" viewBox="0 0 6 16" aria-hidden="true"><path d="M0 .5H6M0 3.500H6M0 6.500H6M0 9.500H6M0 12.500H6M0 15.500H6" stroke="#444" /></svg>
          </div>
          <Sidebar />
        </div>
        <BottomBar />
      </div>
      <div className="h-[25px] shrink-0" />
    </div>
  );
}
